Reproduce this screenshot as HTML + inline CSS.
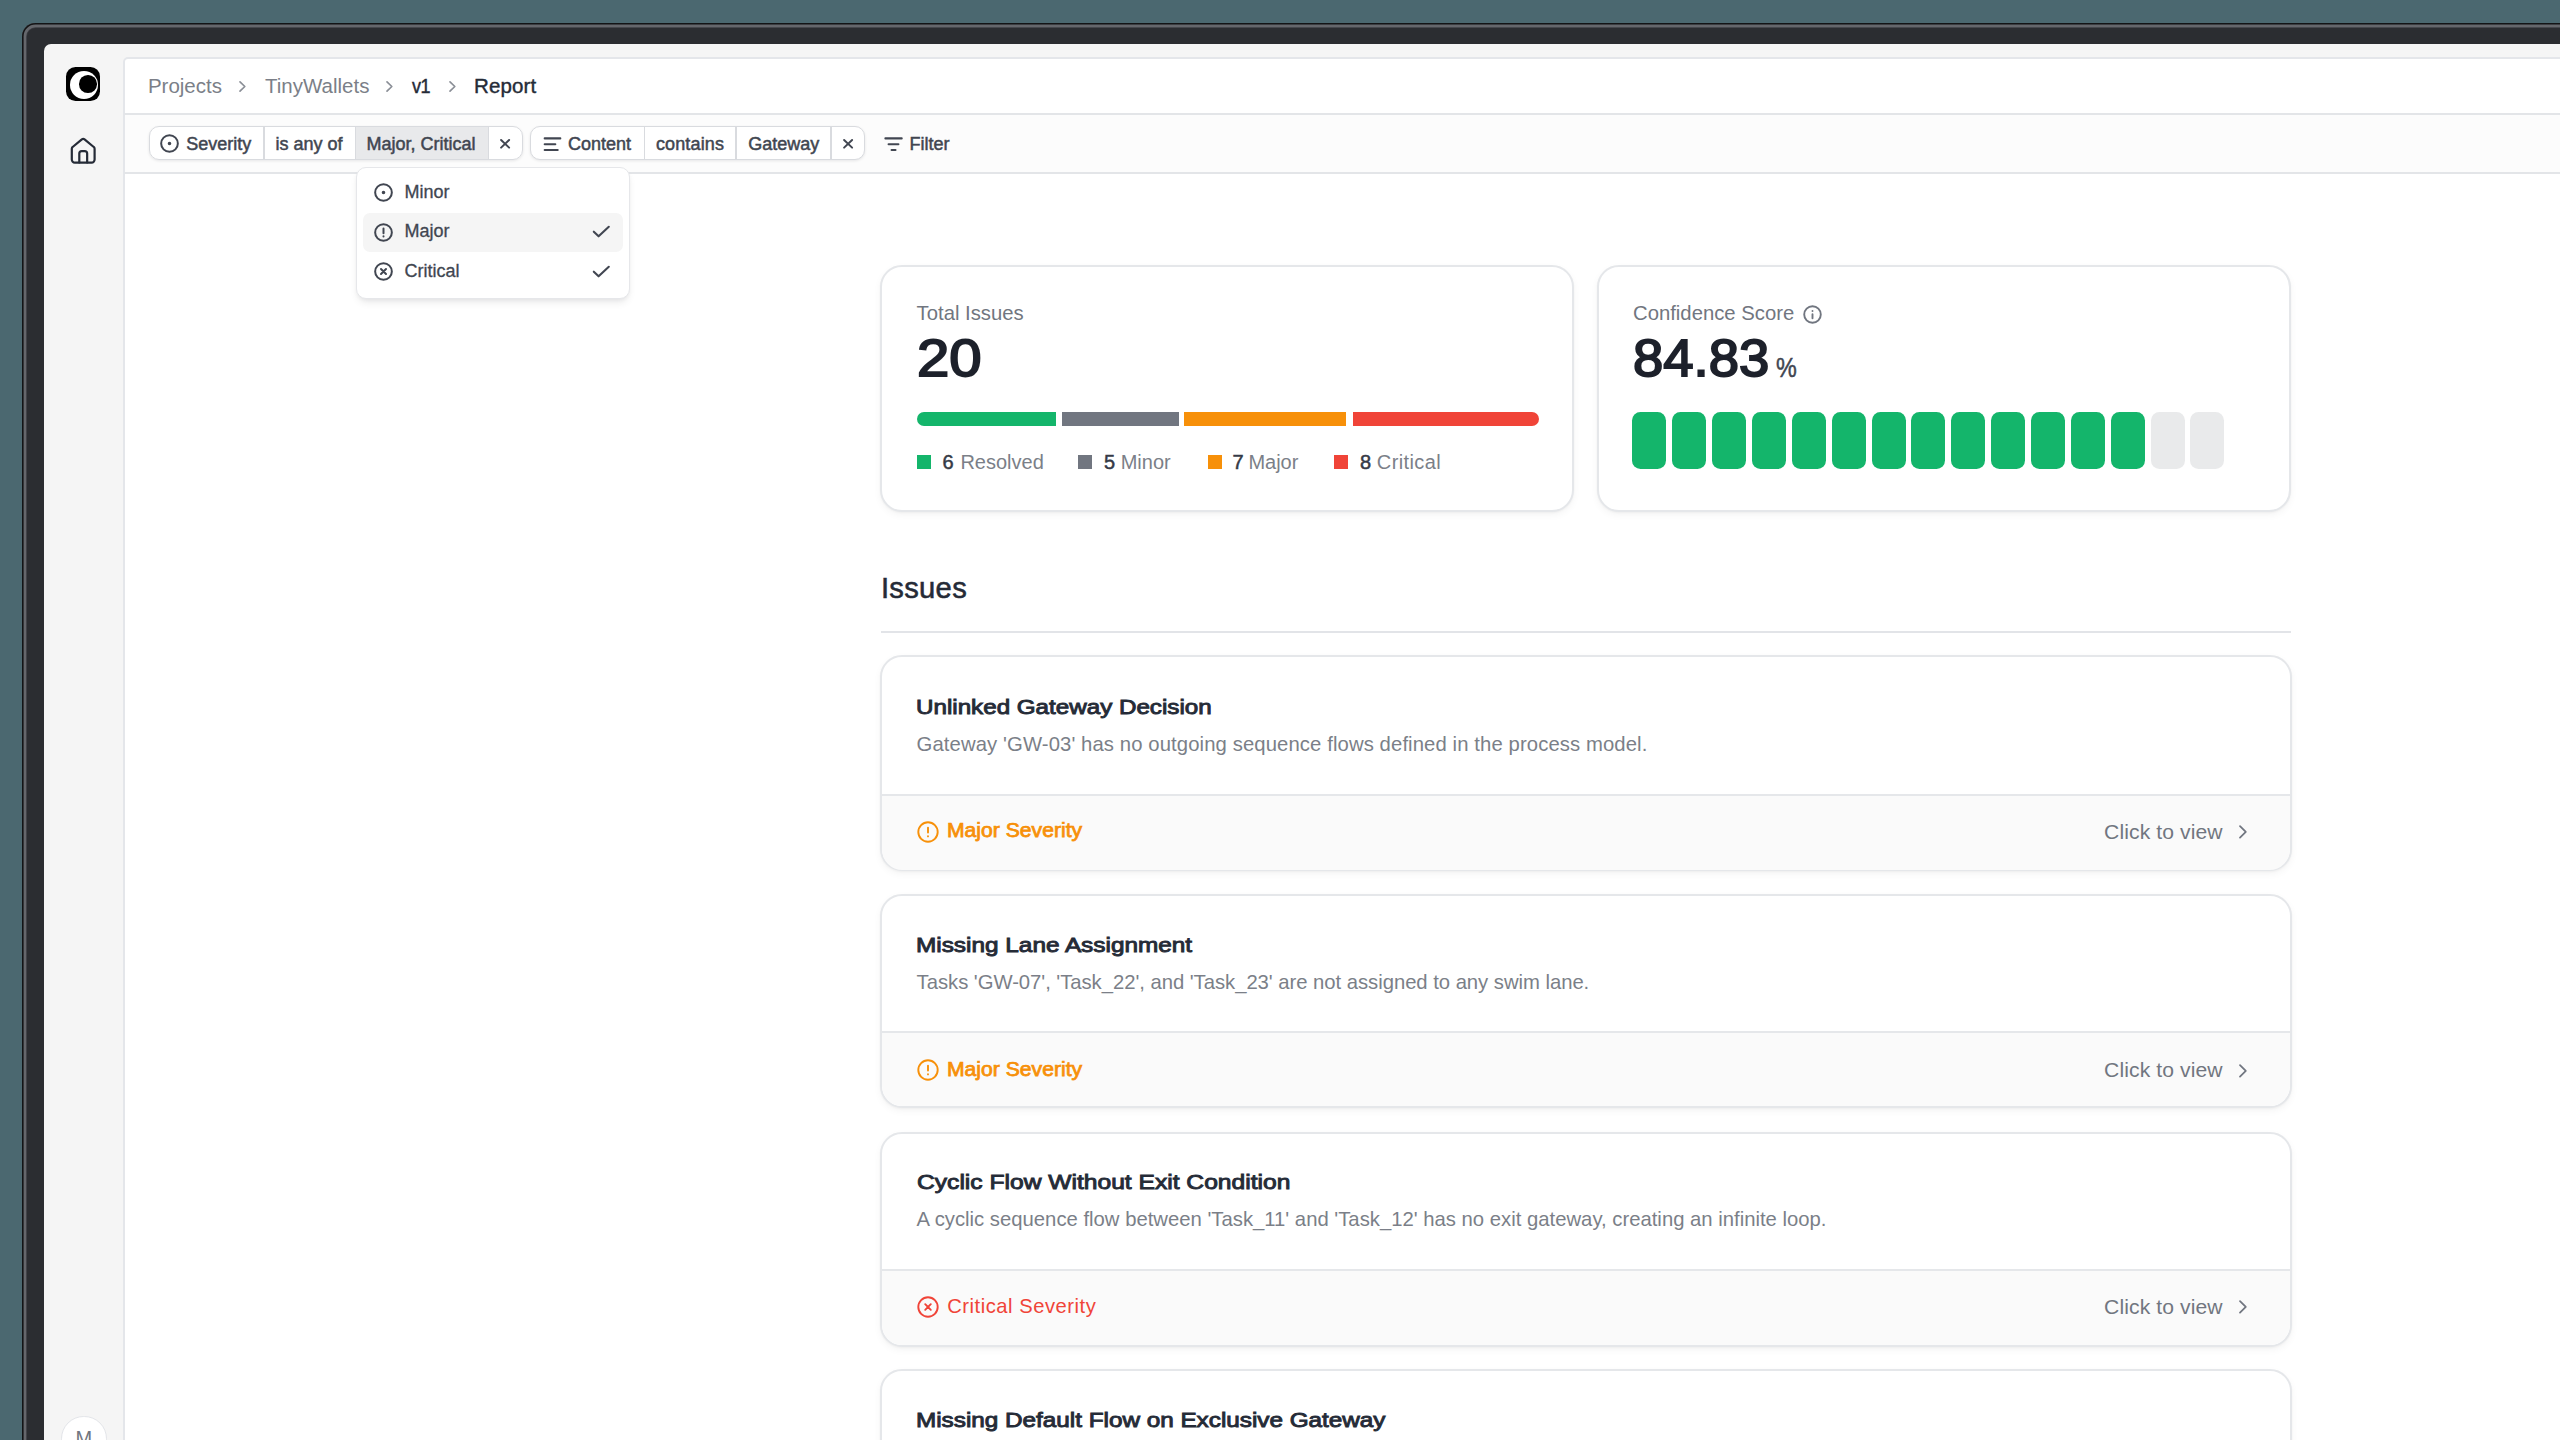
<!DOCTYPE html>
<html>
<head>
<meta charset="utf-8">
<title>Report</title>
<style>
*{box-sizing:border-box;margin:0;padding:0}
html,body{width:2560px;height:1440px;overflow:hidden}
body{background:#4b6870;font-family:"Liberation Sans",sans-serif;position:relative;color:#181d27}
.abs{position:absolute}
.t{position:absolute;white-space:nowrap;line-height:1}
svg{position:absolute;overflow:visible}
.ic{fill:none;stroke-linecap:round;stroke-linejoin:round}

/* device frame */
#bezel{left:22px;top:23px;width:2700px;height:1600px;border-radius:13.5px;background:#2b2d31;
  box-shadow:inset 0 0 0 1.6px #131416, inset 0 0 0 4.2px #65676c, inset 0 0 0 4.9px #3c3e43}
#screen{left:43.5px;top:44px;width:2700px;height:1600px;border-radius:7px;background:#f5f5f5}
#main{left:122.9px;top:57.4px;width:2700px;height:1600px;border-radius:5px;background:#fff;border:2px solid #e4e6ea}
#crumbline{left:124px;top:113px;width:2500px;height:2px;background:#e3e5e8}
#filterbg{left:124.5px;top:115px;width:2500px;height:57px;background:#fcfcfc}
#filterline{left:124px;top:172px;width:2500px;height:2px;background:#e3e5e8}

/* text styles */
.bc{font-size:20.5px;top:75.6px}
.g5{color:#7b7f88}.g7{color:#414651}.g8{color:#252b37}.g9{color:#181d27}
.chip{border:1.5px solid #d9dbdf;border-radius:10px;background:#fff;height:34px;top:126px;box-shadow:0 1px 3px rgba(10,13,18,.09)}
.sep{width:1.5px;background:#d9dbdf;top:127px;height:32px}
.ct{font-size:18px;top:134.5px;color:#414651;-webkit-text-stroke:0.5px #414651}
.dd{font-size:18px;color:#414651;-webkit-text-stroke:0.3px #414651}
.card{border:2px solid #e5e7ea;border-radius:22px;background:#fff;box-shadow:0 3px 8px -1px rgba(10,13,18,.055),0 1px 2px rgba(10,13,18,.035)}
.lbl{font-size:20.3px;color:#717680}
.big{font-size:51.4px;color:#1d212b;-webkit-text-stroke:1.9px #1d212b;transform-origin:0 0}
.lg{font-size:20px;top:452.1px}
.sq{width:14px;height:14px;top:454.7px;margin-left:.4px}
.blk{top:411.6px;width:34px;height:57.3px;border-radius:8.5px;background:#14b56b}
.blk.off{background:#e9eaeb}
.ttl{font-size:20.5px;color:#252b37;-webkit-text-stroke:.9px #252b37;transform-origin:0 0}
.dsc{font-size:20.3px;color:#7b7f88;letter-spacing:.1px}
.sev{font-size:20px}
.ctv{font-size:21.1px;color:#717680;letter-spacing:.1px}
.foot{background:#fafafa;border-top:2px solid #e5e7ea;border-radius:0 0 20.5px 20.5px}
</style>
</head>
<body>
<div id="bezel" class="abs"></div>
<div id="screen" class="abs"></div>
<div id="main" class="abs"></div>
<div id="crumbline" class="abs"></div>
<div id="filterbg" class="abs"></div>
<div id="filterline" class="abs"></div>
<!--SIDEBAR-->
<div class="abs" style="left:65.7px;top:67.1px;width:34.3px;height:34.4px;border-radius:9.5px;background:#000"></div>
<div class="abs" style="left:70px;top:70.5px;width:28px;height:28px;border-radius:50%;background:#fff"></div>
<div class="abs" style="left:79.1px;top:75.4px;width:17.7px;height:17.7px;border-radius:50%;background:#000"></div>
<svg class="ic" style="left:66px;top:134px" width="34" height="34" viewBox="0 0 34 34" stroke="#252b37" stroke-width="2.2"><path d="M5.8 25.6V14.7a2.2 2.2 0 0 1 .85-1.73L15.85 5.3a2.2 2.2 0 0 1 2.7 0L27.75 12.97a2.2 2.2 0 0 1 .85 1.73V25.6a3 3 0 0 1-3 3H8.8a3 3 0 0 1-3-3Z"/><path d="M13.3 28.4V19.6a2.5 2.5 0 0 1 2.5-2.5h2.85a2.5 2.5 0 0 1 2.5 2.5V28.4"/></svg>
<div class="abs" style="left:61.2px;top:1416.2px;width:45.4px;height:45.4px;border-radius:50%;background:#fff;border:1.5px solid #e3e5e9"></div>
<div class="t" style="left:75.6px;top:1427.5px;font-size:20px;color:#717680">M</div>
<!--CRUMBS-->
<div class="t bc g5" style="left:147.9px">Projects</div>
<svg class="ic" style="left:238.8px;top:80.5px" width="7" height="11" viewBox="0 0 7 11" stroke="#8b8f97" stroke-width="1.7"><path d="M1 0.8 5.8 5.5 1 10.2"/></svg>
<div class="t bc g5" style="left:265px">TinyWallets</div>
<svg class="ic" style="left:385.8px;top:80.5px" width="7" height="11" viewBox="0 0 7 11" stroke="#8b8f97" stroke-width="1.7"><path d="M1 0.8 5.8 5.5 1 10.2"/></svg>
<div class="t bc g8" style="left:412.4px;letter-spacing:-.6px;-webkit-text-stroke:.45px #252b37;transform:scaleX(.88);transform-origin:0 0">v1</div>
<svg class="ic" style="left:449.4px;top:80.5px" width="7" height="11" viewBox="0 0 7 11" stroke="#8b8f97" stroke-width="1.7"><path d="M1 0.8 5.8 5.5 1 10.2"/></svg>
<div class="t bc g8" style="left:474px;letter-spacing:.12px;-webkit-text-stroke:.4px #252b37">Report</div>
<!--FILTERS-->
<div class="abs chip" style="left:148.5px;width:374.5px;background:linear-gradient(to right,#fff 0,#fff 205.5px,#e8e9eb 205.5px,#e8e9eb 338.5px,#fff 338.5px)"></div>
<div class="abs sep" style="left:263px"></div><div class="abs sep" style="left:354.5px"></div><div class="abs sep" style="left:487.5px"></div>
<svg class="ic" style="left:160.4px;top:134.3px" width="19" height="19" viewBox="0 0 19 19" stroke="#414651" stroke-width="2"><circle cx="9.5" cy="9.5" r="8.35"/><circle cx="9.5" cy="9.5" r="0.8" fill="#414651"/></svg>
<div class="t ct" style="left:186.3px">Severity</div>
<div class="t ct" style="left:275.5px">is any of</div>
<div class="t ct" style="left:366.5px">Major, Critical</div>
<svg class="ic" style="left:499.7px;top:139.1px" width="10" height="10" viewBox="0 0 10 10" stroke="#414651" stroke-width="2"><path d="M1.1 1 9.1 8.6M9.1 1 1.1 8.6"/></svg>
<div class="abs chip" style="left:530.1px;width:335.4px"></div>
<div class="abs sep" style="left:643.5px"></div><div class="abs sep" style="left:735px"></div><div class="abs sep" style="left:830px"></div>
<svg class="ic" style="left:543px;top:136px" width="20" height="16" viewBox="0 0 20 16" stroke="#414651" stroke-width="2.1"><path d="M1.7 2.4H17.3M1.7 8.3H12.3M1.7 14H14.7"/></svg>
<div class="t ct" style="left:567.9px">Content</div>
<div class="t ct" style="left:655.9px;letter-spacing:.15px">contains</div>
<div class="t ct" style="left:748.3px">Gateway</div>
<svg class="ic" style="left:843.2px;top:139.1px" width="10" height="10" viewBox="0 0 10 10" stroke="#414651" stroke-width="2"><path d="M1.1 1 9.1 8.6M9.1 1 1.1 8.6"/></svg>
<svg class="ic" style="left:883px;top:136px" width="20" height="16" viewBox="0 0 20 16" stroke="#414651" stroke-width="2.1"><path d="M2.4 2.4H18.7M5.6 8.3H15.4M8.6 14H12.5"/></svg>
<div class="t ct" style="left:909.6px">Filter</div>
<!--STATS-->
<div class="abs card" style="left:880.2px;top:264.5px;width:694px;height:247.2px"></div>
<div class="t lbl" style="left:916.6px;top:302.9px">Total Issues</div>
<div class="t big" style="left:916.9px;top:333px;transform:scaleX(1.13)">20</div>
<div class="abs" style="left:916.8px;top:411.7px;width:139px;height:14.1px;border-radius:7px 0 0 7px;background:#14b56b"></div>
<div class="abs" style="left:1062px;top:411.7px;width:117px;height:14.1px;background:#717680"></div>
<div class="abs" style="left:1183.5px;top:411.7px;width:162.4px;height:14.1px;background:#f79009"></div>
<div class="abs" style="left:1352.6px;top:411.7px;width:186.8px;height:14.1px;border-radius:0 7px 7px 0;background:#f04438"></div>
<div class="abs sq" style="left:917px;background:#14b56b"></div>
<div class="t lg g7" style="left:942.6px;-webkit-text-stroke:.5px #353a46;color:#353a46">6</div><div class="t lg g5" style="left:960.4px">Resolved</div>
<div class="abs sq" style="left:1077.7px;background:#717680"></div>
<div class="t lg g7" style="left:1103.9px;-webkit-text-stroke:.5px #353a46;color:#353a46">5</div><div class="t lg g5" style="left:1120.7px">Minor</div>
<div class="abs sq" style="left:1207.2px;background:#f79009"></div>
<div class="t lg g7" style="left:1232.6px;-webkit-text-stroke:.5px #353a46;color:#353a46">7</div><div class="t lg g5" style="left:1248.4px">Major</div>
<div class="abs sq" style="left:1333.7px;background:#f04438"></div>
<div class="t lg g7" style="left:1360.1px;-webkit-text-stroke:.5px #353a46;color:#353a46">8</div><div class="t lg g5" style="left:1376.8px;letter-spacing:.4px">Critical</div>

<div class="abs card" style="left:1597.2px;top:264.5px;width:694px;height:247.2px"></div>
<div class="t lbl" style="left:1633px;top:302.9px">Confidence Score</div>
<svg class="ic" style="left:1803px;top:304.5px" width="19" height="19" viewBox="0 0 19 19" stroke="#717680" stroke-width="1.9"><circle cx="9.5" cy="9.5" r="8.3"/><path d="M9.5 9.2V13.2M9.5 5.9V6"/></svg>
<div class="t big" style="left:1633.2px;top:333px;transform:scaleX(1.06)">84.83</div>
<div class="t" style="left:1776.2px;top:353.1px;font-size:28.5px;color:#414651;-webkit-text-stroke:.5px #414651;transform:scaleX(.82);transform-origin:0 0">%</div>
<div class="abs blk" style="left:1632.40px"></div><div class="abs blk" style="left:1672.26px"></div><div class="abs blk" style="left:1712.12px"></div><div class="abs blk" style="left:1751.98px"></div><div class="abs blk" style="left:1791.84px"></div><div class="abs blk" style="left:1831.70px"></div><div class="abs blk" style="left:1871.56px"></div><div class="abs blk" style="left:1911.42px"></div><div class="abs blk" style="left:1951.28px"></div><div class="abs blk" style="left:1991.14px"></div><div class="abs blk" style="left:2031.00px"></div><div class="abs blk" style="left:2070.86px"></div><div class="abs blk" style="left:2110.72px"></div><div class="abs blk off" style="left:2150.58px"></div><div class="abs blk off" style="left:2190.44px"></div>
<!--ISSUES-->
<div class="t" style="left:880.9px;top:573.6px;font-size:29.2px;letter-spacing:.3px;color:#252b37;-webkit-text-stroke:.55px #252b37">Issues</div>
<div class="abs" style="left:880.8px;top:631.2px;width:1410.2px;height:2px;background:#e2e4e8"></div>
<div class="abs card" style="left:880px;top:654.50px;width:1411.5px;height:216.75px"></div>
<div class="abs foot" style="left:882px;top:794.25px;width:1407.5px;height:75.25px"></div>
<div class="t ttl" style="left:916.14px;top:697.10px;transform:scaleX(1.1796)">Unlinked Gateway Decision</div>
<div class="t dsc" style="left:916.6px;top:733.92px">Gateway 'GW-03' has no outgoing sequence flows defined in the process model.</div>
<svg class="ic" style="left:917.1px;top:820.90px" width="22" height="22" viewBox="0 0 22 22" stroke="#f79009" stroke-width="1.9"><circle cx="11" cy="11" r="9.7"/><path d="M11 6.6V11.6M11 15.3V15.4"/></svg>
<div class="t sev" style="left:946.82px;top:821.39px;color:#f79009;font-size:19.3px;-webkit-text-stroke:0.75px #f79009;transform:scaleX(1.0967);transform-origin:0 0">Major Severity</div>
<div class="t ctv" style="left:2104.1px;top:820.54px">Click to view</div>
<svg class="ic" style="left:2239.1px;top:825.00px" width="9" height="15" viewBox="0 0 9 15" stroke="#717680" stroke-width="1.8"><path d="M1 1.2 6.8 6.9 1 12.6"/></svg>
<div class="abs card" style="left:880px;top:894.00px;width:1411.5px;height:213.90px"></div>
<div class="abs foot" style="left:882px;top:1030.65px;width:1407.5px;height:75.50px"></div>
<div class="t ttl" style="left:915.99px;top:935.30px;transform:scaleX(1.1877)">Missing Lane Assignment</div>
<div class="t dsc" style="left:916.6px;top:972.22px;letter-spacing:-.04px">Tasks 'GW-07', 'Task_22', and 'Task_23' are not assigned to any swim lane.</div>
<svg class="ic" style="left:917.1px;top:1059.40px" width="22" height="22" viewBox="0 0 22 22" stroke="#f79009" stroke-width="1.9"><circle cx="11" cy="11" r="9.7"/><path d="M11 6.6V11.6M11 15.3V15.4"/></svg>
<div class="t sev" style="left:946.82px;top:1059.79px;color:#f79009;font-size:19.3px;-webkit-text-stroke:0.75px #f79009;transform:scaleX(1.0967);transform-origin:0 0">Major Severity</div>
<div class="t ctv" style="left:2104.1px;top:1058.94px">Click to view</div>
<svg class="ic" style="left:2239.1px;top:1063.50px" width="9" height="15" viewBox="0 0 9 15" stroke="#717680" stroke-width="1.8"><path d="M1 1.2 6.8 6.9 1 12.6"/></svg>
<div class="abs card" style="left:880px;top:1131.50px;width:1411.5px;height:215.40px"></div>
<div class="abs foot" style="left:882px;top:1268.65px;width:1407.5px;height:76.50px"></div>
<div class="t ttl" style="left:916.71px;top:1172.20px;transform:scaleX(1.2004)">Cyclic Flow Without Exit Condition</div>
<div class="t dsc" style="left:916.6px;top:1209.07px;letter-spacing:0">A cyclic sequence flow between 'Task_11' and 'Task_12' has no exit gateway, creating an infinite loop.</div>
<svg class="ic" style="left:917.1px;top:1296.20px" width="22" height="22" viewBox="0 0 22 22" stroke="#f04438" stroke-width="1.9"><circle cx="11" cy="11" r="9.7"/><path d="M8.2 8.2 13.8 13.8M13.8 8.2 8.2 13.8"/></svg>
<div class="t sev" style="left:947.2px;top:1296.00px;color:#f04438;font-size:20.2px;letter-spacing:.52px">Critical Severity</div>
<div class="t ctv" style="left:2104.1px;top:1295.54px">Click to view</div>
<svg class="ic" style="left:2239.1px;top:1300.30px" width="9" height="15" viewBox="0 0 9 15" stroke="#717680" stroke-width="1.8"><path d="M1 1.2 6.8 6.9 1 12.6"/></svg>
<div class="abs card" style="left:880px;top:1369.00px;width:1411.5px;height:214.00px"></div>
<div class="abs foot" style="left:882px;top:1505.65px;width:1407.5px;height:75.60px"></div>
<div class="t ttl" style="left:915.99px;top:1410.30px;transform:scaleX(1.1841)">Missing Default Flow on Exclusive Gateway</div>
<div class="t dsc" style="left:916.6px;top:1447.22px">Exclusive gateway has no default flow.</div>
<svg class="ic" style="left:917.1px;top:1534.00px" width="22" height="22" viewBox="0 0 22 22" stroke="#f04438" stroke-width="1.9"><circle cx="11" cy="11" r="9.7"/><path d="M8.2 8.2 13.8 13.8M13.8 8.2 8.2 13.8"/></svg>
<div class="t sev" style="left:947.2px;top:1533.90px;color:#f04438;font-size:20.2px;letter-spacing:.52px">Critical Severity</div>
<div class="t ctv" style="left:2104.1px;top:1533.44px">Click to view</div>
<svg class="ic" style="left:2239.1px;top:1538.10px" width="9" height="15" viewBox="0 0 9 15" stroke="#717680" stroke-width="1.8"><path d="M1 1.2 6.8 6.9 1 12.6"/></svg>
<!--DROPDOWN-->
<div class="abs" style="left:355.5px;top:166.5px;width:274.5px;height:132.5px;border-radius:10px;background:#fff;border:1.5px solid #e6e7ea;box-shadow:0 5px 9px -2px rgba(10,13,18,.09),0 2px 4px -1px rgba(10,13,18,.05)"></div>
<div class="abs" style="left:362.5px;top:213.2px;width:260.5px;height:39.2px;border-radius:7px;background:#f5f5f5"></div>
<svg class="ic" style="left:373.5px;top:183.2px" width="19" height="19" viewBox="0 0 19 19" stroke="#414651" stroke-width="2"><circle cx="9.5" cy="9.5" r="8.35"/><circle cx="9.5" cy="9.5" r="0.8" fill="#414651"/></svg>
<svg class="ic" style="left:373.5px;top:222.5px" width="19" height="19" viewBox="0 0 19 19" stroke="#414651" stroke-width="2"><circle cx="9.5" cy="9.5" r="8.35"/><path d="M9.5 5.6V10.2M9.5 13.3V13.4"/></svg>
<svg class="ic" style="left:373.5px;top:262px" width="19" height="19" viewBox="0 0 19 19" stroke="#414651" stroke-width="2"><circle cx="9.5" cy="9.5" r="8.35"/><path d="M7 7 12 12M12 7 7 12"/></svg>
<div class="t dd" style="left:404.6px;top:182.9px">Minor</div>
<div class="t dd" style="left:404.6px;top:222.2px">Major</div>
<div class="t dd" style="left:404.6px;top:262px">Critical</div>
<svg class="ic" style="left:592px;top:225px" width="19" height="14" viewBox="0 0 19 14" stroke="#414651" stroke-width="2.1"><path d="M1.8 6.7 6.6 11.3 16.8 1.8"/></svg><svg class="ic" style="left:592px;top:264.5px" width="19" height="14" viewBox="0 0 19 14" stroke="#414651" stroke-width="2.1"><path d="M1.8 6.7 6.6 11.3 16.8 1.8"/></svg>
</body>
</html>
